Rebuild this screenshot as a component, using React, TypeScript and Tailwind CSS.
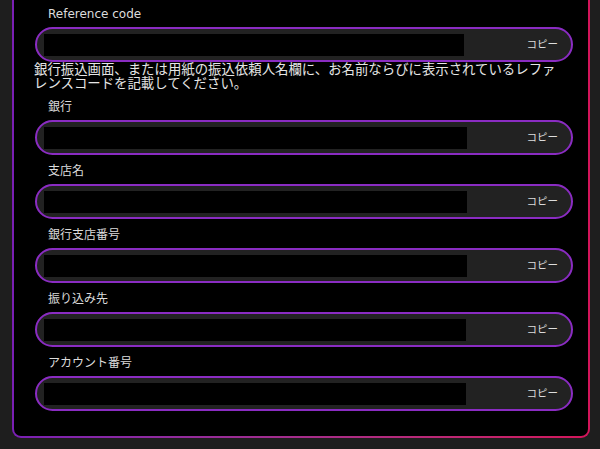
import React from "react";

const fields = [
  { label: "銀行", width: "w-[423px]" },
  { label: "支店名", width: "w-[423px]" },
  { label: "銀行支店番号", width: "w-[423px]" },
  { label: "振り込み先", width: "w-[422px]" },
  { label: "アカウント番号", width: "w-[422px]" },
];

function CopyField({ width }: { width: string }) {
  return (
    <div className="ml-[1px] flex h-[35px] w-[538px] items-center rounded-full border-2 border-[#8a2cc2] bg-[#222222] pl-[7px] pr-[13px]">
      <div className={`h-[22px] ${width} bg-black`} />
      <span className="ml-auto text-[10.5px] leading-none text-[#dddddd]">コピー</span>
    </div>
  );
}

function Label({ children }: { children: React.ReactNode }) {
  return (
    <div className="mb-[5px] pl-[14px] text-[12px] leading-[16px] text-[#dcdcdc]">{children}</div>
  );
}

export default function App() {
  return (
    <div
      className="min-h-[449px] w-[600px] bg-[#1e1e1e] pl-[12px] pr-[10px]"
      style={{ fontFamily: '"DejaVu Sans", "Noto Sans CJK JP", sans-serif' }}
    >
      <div className="rounded-b-[9px] bg-gradient-to-r from-[#7a1fb4] to-[#d4145a] px-[2px] pb-[2px]">
        <div className="rounded-b-[7px] bg-black pb-[25px] pl-[20px] pr-[13px] pt-[6px]">
          <Label>Reference code</Label>
          <CopyField width="w-[420px]" />
          <p className="mb-[8px] mt-[1px] w-[530px] text-[13.4px] leading-[14px] text-[#e6e6e6]">
            銀行振込画面、または用紙の振込依頼人名欄に、お名前ならびに表示されているレファレンスコードを記載してください。
          </p>
          {fields.map((f, i) => (
            <div key={f.label} className={i < fields.length - 1 ? "mb-[8px]" : ""}>
              <Label>{f.label}</Label>
              <CopyField width={f.width} />
            </div>
          ))}
        </div>
      </div>
    </div>
  );
}
